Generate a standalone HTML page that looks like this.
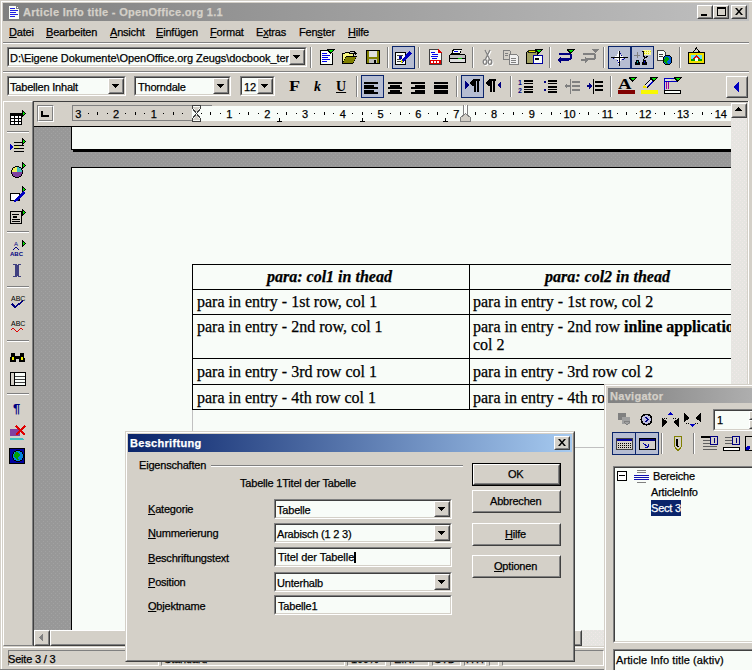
<!DOCTYPE html>
<html><head><meta charset="utf-8">
<style>
*{margin:0;padding:0;box-sizing:border-box}
html,body{width:752px;height:670px;overflow:hidden;background:#D4D0C8;font-family:"Liberation Sans",sans-serif;font-size:11px;color:#000;position:relative}
.a{position:absolute}
.t{position:absolute;white-space:nowrap;line-height:13px;letter-spacing:-0.2px;-webkit-text-stroke:0.25px currentColor}
.b{font-weight:bold;letter-spacing:0.3px}
u{text-decoration:underline;text-underline-offset:1px}
.s{font-family:"Liberation Serif",serif;font-size:16px;line-height:18px;letter-spacing:0}
svg.a{overflow:visible}
</style></head><body>
<div class="a" style="left:0px;top:0px;width:752px;height:1px;background:#D4D0C8"></div>
<div class="a" style="left:1px;top:1px;width:751px;height:1px;background:#FFFFFF"></div>
<div class="a" style="left:1px;top:1px;width:1px;height:669px;background:#FFFFFF"></div>
<div class="a" style="left:3px;top:3px;width:746px;height:18px;background:linear-gradient(90deg,#808080,#C0C0C0)"></div>
<svg class="a" style="left:8px;top:5px" width="12" height="15" viewBox="0 0 12 15" shape-rendering="crispEdges"><rect x="0.5" y="0.5" width="11" height="14" fill="#F8FCF8" stroke="#808080"/><rect x="8" y="1" width="3" height="3" fill="#808080"/><rect x="9" y="2" width="1" height="1" fill="#fff"/><g fill="#2020E0"><rect x="2" y="3" width="5" height="1"/><rect x="2" y="5" width="8" height="1"/><rect x="2" y="7" width="6" height="1"/><rect x="2" y="9" width="8" height="1"/><rect x="2" y="11" width="5" height="1"/></g></svg>
<div class="t b" style="left:23px;top:6px;color:#D4D0C8">Article Info title - OpenOffice.org 1.1</div>
<div class="a" style="left:697px;top:5px;width:16px;height:14px;background:#D4D0C8;border-style:solid;border-width:1px;border-color:#FFFFFF #404040 #404040 #FFFFFF"><div class="a" style="left:0;top:0;right:0;bottom:0;border-style:solid;border-width:1px;border-color:#D4D0C8 #808080 #808080 #D4D0C8"></div></div>
<div class="a" style="left:713px;top:5px;width:16px;height:14px;background:#D4D0C8;border-style:solid;border-width:1px;border-color:#FFFFFF #404040 #404040 #FFFFFF"><div class="a" style="left:0;top:0;right:0;bottom:0;border-style:solid;border-width:1px;border-color:#D4D0C8 #808080 #808080 #D4D0C8"></div></div>
<div class="a" style="left:731px;top:5px;width:16px;height:14px;background:#D4D0C8;border-style:solid;border-width:1px;border-color:#FFFFFF #404040 #404040 #FFFFFF"><div class="a" style="left:0;top:0;right:0;bottom:0;border-style:solid;border-width:1px;border-color:#D4D0C8 #808080 #808080 #D4D0C8"></div></div>
<div class="a" style="left:701px;top:14px;width:6px;height:2px;background:#000"></div>
<div class="a" style="left:717px;top:7px;width:9px;height:9px;border:1px solid #000;border-top-width:2px"></div>
<svg class="a" style="left:735px;top:8px" width="8" height="7" viewBox="0 0 8 7" shape-rendering="crispEdges"><path d="M0 0h2l2 2.5 2-2.5h2l-3 3.5 3 3.5h-2l-2-2.5-2 2.5h-2l3-3.5z" fill="#000" shape-rendering="geometricPrecision"/></svg>
<div class="t " style="left:9px;top:26px;"><u>D</u>atei</div>
<div class="t " style="left:46px;top:26px;"><u>B</u>earbeiten</div>
<div class="t " style="left:110px;top:26px;"><u>A</u>nsicht</div>
<div class="t " style="left:156px;top:26px;"><u>E</u>infügen</div>
<div class="t " style="left:210px;top:26px;"><u>F</u>ormat</div>
<div class="t " style="left:256px;top:26px;">E<u>x</u>tras</div>
<div class="t " style="left:299px;top:26px;">Fen<u>s</u>ter</div>
<div class="t " style="left:348px;top:26px;"><u>H</u>ilfe</div>
<div class="a" style="left:3px;top:42px;width:746px;height:1px;background:#808080"></div>
<div class="a" style="left:3px;top:43px;width:746px;height:1px;background:#FFFFFF"></div>
<div class="a" style="left:7px;top:47px;width:300px;height:20px;background:#F8FCF8;border-style:solid;border-width:1px;border-color:#808080 #FFFFFF #FFFFFF #808080"><div class="a" style="left:0;top:0;right:0;bottom:0;border-style:solid;border-width:1px;border-color:#404040 #D4D0C8 #D4D0C8 #404040"></div></div>
<div class="t " style="left:10px;top:52px;letter-spacing:-0.06px">D:\Eigene Dokumente\OpenOffice.org Zeugs\docbook_ter</div>
<div class="a" style="left:289px;top:49px;width:16px;height:16px;background:#D4D0C8;border-style:solid;border-width:1px;border-color:#FFFFFF #404040 #404040 #FFFFFF"><div class="a" style="left:0;top:0;right:0;bottom:0;border-style:solid;border-width:1px;border-color:#D4D0C8 #808080 #808080 #D4D0C8"></div></div>
<svg class="a" style="left:293px;top:55px" width="7" height="4"><path d="M0 0h7v1h-1v1h-1v1h-1v1h-1v-1h-1v-1h-1v-1h-1z" fill="#000"/></svg>
<div class="a" style="left:310px;top:47px;width:1px;height:21px;background:#808080"></div>
<div class="a" style="left:311px;top:47px;width:1px;height:21px;background:#FFFFFF"></div>
<div class="a" style="left:387px;top:47px;width:1px;height:21px;background:#808080"></div>
<div class="a" style="left:388px;top:47px;width:1px;height:21px;background:#FFFFFF"></div>
<div class="a" style="left:418px;top:47px;width:1px;height:21px;background:#808080"></div>
<div class="a" style="left:419px;top:47px;width:1px;height:21px;background:#FFFFFF"></div>
<div class="a" style="left:472px;top:47px;width:1px;height:21px;background:#808080"></div>
<div class="a" style="left:473px;top:47px;width:1px;height:21px;background:#FFFFFF"></div>
<div class="a" style="left:549px;top:47px;width:1px;height:21px;background:#808080"></div>
<div class="a" style="left:550px;top:47px;width:1px;height:21px;background:#FFFFFF"></div>
<div class="a" style="left:603px;top:47px;width:1px;height:21px;background:#808080"></div>
<div class="a" style="left:604px;top:47px;width:1px;height:21px;background:#FFFFFF"></div>
<div class="a" style="left:679px;top:47px;width:1px;height:21px;background:#808080"></div>
<div class="a" style="left:680px;top:47px;width:1px;height:21px;background:#FFFFFF"></div>
<div class="a" style="left:392px;top:46px;width:23px;height:23px;background:#B6BDD2;border:1px solid #0A246A"></div>
<div class="a" style="left:608px;top:46px;width:23px;height:23px;background:#B6BDD2;border:1px solid #0A246A"></div>
<div class="a" style="left:631px;top:46px;width:23px;height:23px;background:#B6BDD2;border:1px solid #0A246A"></div>
<div class="a" style="left:3px;top:71px;width:746px;height:1px;background:#808080"></div>
<div class="a" style="left:3px;top:72px;width:746px;height:1px;background:#FFFFFF"></div>
<div class="a" style="left:7px;top:76px;width:119px;height:20px;background:#F8FCF8;border-style:solid;border-width:1px;border-color:#808080 #FFFFFF #FFFFFF #808080"><div class="a" style="left:0;top:0;right:0;bottom:0;border-style:solid;border-width:1px;border-color:#404040 #D4D0C8 #D4D0C8 #404040"></div></div>
<div class="t " style="left:10px;top:81px;">Tabellen Inhalt</div>
<div class="a" style="left:108px;top:78px;width:16px;height:16px;background:#D4D0C8;border-style:solid;border-width:1px;border-color:#FFFFFF #404040 #404040 #FFFFFF"><div class="a" style="left:0;top:0;right:0;bottom:0;border-style:solid;border-width:1px;border-color:#D4D0C8 #808080 #808080 #D4D0C8"></div></div>
<svg class="a" style="left:112px;top:84px" width="7" height="4"><path d="M0 0h7v1h-1v1h-1v1h-1v1h-1v-1h-1v-1h-1v-1h-1z" fill="#000"/></svg>
<div class="a" style="left:134px;top:76px;width:97px;height:20px;background:#F8FCF8;border-style:solid;border-width:1px;border-color:#808080 #FFFFFF #FFFFFF #808080"><div class="a" style="left:0;top:0;right:0;bottom:0;border-style:solid;border-width:1px;border-color:#404040 #D4D0C8 #D4D0C8 #404040"></div></div>
<div class="t " style="left:138px;top:81px;">Thorndale</div>
<div class="a" style="left:213px;top:78px;width:16px;height:16px;background:#D4D0C8;border-style:solid;border-width:1px;border-color:#FFFFFF #404040 #404040 #FFFFFF"><div class="a" style="left:0;top:0;right:0;bottom:0;border-style:solid;border-width:1px;border-color:#D4D0C8 #808080 #808080 #D4D0C8"></div></div>
<svg class="a" style="left:217px;top:84px" width="7" height="4"><path d="M0 0h7v1h-1v1h-1v1h-1v1h-1v-1h-1v-1h-1v-1h-1z" fill="#000"/></svg>
<div class="a" style="left:240px;top:76px;width:35px;height:20px;background:#F8FCF8;border-style:solid;border-width:1px;border-color:#808080 #FFFFFF #FFFFFF #808080"><div class="a" style="left:0;top:0;right:0;bottom:0;border-style:solid;border-width:1px;border-color:#404040 #D4D0C8 #D4D0C8 #404040"></div></div>
<div class="t " style="left:244px;top:81px;">12</div>
<div class="a" style="left:257px;top:78px;width:16px;height:16px;background:#D4D0C8;border-style:solid;border-width:1px;border-color:#FFFFFF #404040 #404040 #FFFFFF"><div class="a" style="left:0;top:0;right:0;bottom:0;border-style:solid;border-width:1px;border-color:#D4D0C8 #808080 #808080 #D4D0C8"></div></div>
<svg class="a" style="left:261px;top:84px" width="7" height="4"><path d="M0 0h7v1h-1v1h-1v1h-1v1h-1v-1h-1v-1h-1v-1h-1z" fill="#000"/></svg>
<div class="a" style="left:356px;top:76px;width:1px;height:21px;background:#808080"></div>
<div class="a" style="left:357px;top:76px;width:1px;height:21px;background:#FFFFFF"></div>
<div class="a" style="left:456px;top:76px;width:1px;height:21px;background:#808080"></div>
<div class="a" style="left:457px;top:76px;width:1px;height:21px;background:#FFFFFF"></div>
<div class="a" style="left:510px;top:76px;width:1px;height:21px;background:#808080"></div>
<div class="a" style="left:511px;top:76px;width:1px;height:21px;background:#FFFFFF"></div>
<div class="a" style="left:610px;top:76px;width:1px;height:21px;background:#808080"></div>
<div class="a" style="left:611px;top:76px;width:1px;height:21px;background:#FFFFFF"></div>
<div class="a" style="left:361px;top:75px;width:23px;height:23px;background:#B6BDD2;border:1px solid #0A246A"></div>
<div class="a" style="left:461px;top:75px;width:23px;height:23px;background:#B6BDD2;border:1px solid #0A246A"></div>
<div class="a" style="left:726px;top:76px;width:22px;height:22px;background:#D4D0C8;border-style:solid;border-width:1px;border-color:#FFFFFF #404040 #404040 #FFFFFF"><div class="a" style="left:0;top:0;right:0;bottom:0;border-style:solid;border-width:1px;border-color:#D4D0C8 #808080 #808080 #D4D0C8"></div></div>
<svg class="a" style="left:733px;top:81px" width="7" height="12" viewBox="0 0 7 12" shape-rendering="crispEdges"><path d="M6 0v12L0 6z" fill="#0000C0"/></svg>
<div class="a" style="left:3px;top:101px;width:30px;height:545px;border-style:solid;border-width:1px;border-color:#FFFFFF #808080 #808080 #FFFFFF"></div>
<div class="a" style="left:7px;top:131px;width:22px;height:1px;background:#808080"></div>
<div class="a" style="left:7px;top:132px;width:22px;height:1px;background:#FFFFFF"></div>
<div class="a" style="left:7px;top:231px;width:22px;height:1px;background:#808080"></div>
<div class="a" style="left:7px;top:232px;width:22px;height:1px;background:#FFFFFF"></div>
<div class="a" style="left:7px;top:286px;width:22px;height:1px;background:#808080"></div>
<div class="a" style="left:7px;top:287px;width:22px;height:1px;background:#FFFFFF"></div>
<div class="a" style="left:7px;top:340px;width:22px;height:1px;background:#808080"></div>
<div class="a" style="left:7px;top:341px;width:22px;height:1px;background:#FFFFFF"></div>
<div class="a" style="left:7px;top:393px;width:22px;height:1px;background:#808080"></div>
<div class="a" style="left:7px;top:394px;width:22px;height:1px;background:#FFFFFF"></div>
<div class="a" style="left:33px;top:101px;width:715px;height:1px;background:#404040"></div>
<div class="a" style="left:33px;top:101px;width:1px;height:545px;background:#404040"></div>
<div class="a" style="left:34px;top:102px;width:714px;height:1px;background:#D4D0C8"></div>
<div class="a" style="left:37px;top:105px;width:17px;height:17px;border-style:solid;border-width:1px;border-color:#808080 #FFFFFF #FFFFFF #808080"><div class="a" style="left:0;top:0;right:0;bottom:0;border-style:solid;border-width:1px;border-color:#FFFFFF #808080 #808080 #FFFFFF"></div></div>
<svg class="a" style="left:41px;top:111px" width="8" height="6" viewBox="0 0 8 6" shape-rendering="crispEdges"><path d="M0 0h2v4h6v2h-8z" fill="#000"/></svg>
<div class="a" style="left:72px;top:105px;width:140px;height:16px;background:#D4D0C8;border:1px solid #808080;border-right:none"></div>
<div class="a" style="left:192px;top:106px;width:539px;height:15px;background:#F8FCF8"></div>
<div class="a" style="left:34px;top:126px;width:697px;height:1px;background:#000"></div>
<div class="a" style="left:34px;top:127px;width:697px;height:503px;overflow:hidden;background:conic-gradient(from 270deg at 1px 1px,#A2A2A2 25%,transparent 0) 1px 2px/4px 4px,conic-gradient(from 270deg at 1px 1px,#A2A2A2 25%,transparent 0) 3px 0px/4px 4px,#989898">
<div class="a" style="left:37px;top:-7px;width:700px;height:30px;background:#F8FCF8;border-left:1px solid #000;border-bottom:1px solid #000"></div>
<div class="a" style="left:39px;top:23px;width:700px;height:2px;background:#000"></div>
<div class="a" style="left:37px;top:40px;width:700px;height:470px;background:#F8FCF8;border-left:1px solid #000;border-top:1px solid #000"></div>
<div class="a" style="left:158px;top:283px;width:1px;height:220px;background:#C0C0C0"></div>
<div class="a" style="left:541px;top:320px;width:30px;height:1px;background:#C0C0C0"></div>
<div class="a" style="left:158px;top:137px;width:560px;height:1px;background:#000"></div>
<div class="a" style="left:158px;top:162px;width:560px;height:1px;background:#000"></div>
<div class="a" style="left:158px;top:187px;width:560px;height:1px;background:#000"></div>
<div class="a" style="left:158px;top:231px;width:560px;height:1px;background:#000"></div>
<div class="a" style="left:158px;top:257px;width:560px;height:1px;background:#000"></div>
<div class="a" style="left:158px;top:282px;width:560px;height:1px;background:#000"></div>
<div class="a" style="left:158px;top:137px;width:1px;height:146px;background:#000"></div>
<div class="a" style="left:435px;top:137px;width:1px;height:146px;background:#000"></div>
<div class="a" style="left:711px;top:137px;width:1px;height:146px;background:#000"></div>
<div class="t s" style="left:233px;top:141px;"><b><i>para: col1 in thead</i></b></div>
<div class="t s" style="left:511px;top:141px;"><b><i>para: col2 in thead</i></b></div>
<div class="t s" style="left:163px;top:166px;">para in entry - 1st row, col 1</div>
<div class="t s" style="left:439px;top:166px;">para in entry - 1st row, col 2</div>
<div class="t s" style="left:163px;top:191px;">para in entry - 2nd row, col 1</div>
<div class="t s" style="left:439px;top:191px;">para in entry - 2nd row <b>inline application</b></div>
<div class="t s" style="left:439px;top:209px;">col 2</div>
<div class="t s" style="left:163px;top:236px;">para in entry - 3rd row col 1</div>
<div class="t s" style="left:439px;top:236px;">para in entry - 3rd row col 2</div>
<div class="t s" style="left:163px;top:262px;">para in entry - 4th row col 1</div>
<div class="t s" style="left:439px;top:262px;">para in entry - 4th row col 2</div>
</div>
<div class="a" style="left:731px;top:118px;width:16px;height:528px;background:conic-gradient(from 270deg at 1px 1px,#F0E8E8 25%,transparent 0) 1px 2px/4px 4px,conic-gradient(from 270deg at 1px 1px,#F0E8E8 25%,transparent 0) 3px 0px/4px 4px,#E6E5E1"></div>
<div class="a" style="left:731px;top:103px;width:16px;height:15px;background:#D4D0C8;border-style:solid;border-width:1px;border-color:#FFFFFF #404040 #404040 #FFFFFF"><div class="a" style="left:0;top:0;right:0;bottom:0;border-style:solid;border-width:1px;border-color:#D4D0C8 #808080 #808080 #D4D0C8"></div></div>
<svg class="a" style="left:735px;top:107px" width="7" height="4" viewBox="0 0 7 4" shape-rendering="crispEdges"><path d="M3 0h1v1h1v1h1v1h1v1h-7v-1h1v-1h1v-1h1z" fill="#000"/></svg>
<div class="a" style="left:748px;top:101px;width:1px;height:546px;background:#FFFFFF"></div>
<div class="a" style="left:749px;top:101px;width:3px;height:569px;background:#D4D0C8"></div>
<div class="a" style="left:34px;top:630px;width:697px;height:16px;background:conic-gradient(from 270deg at 1px 1px,#F0E8E8 25%,transparent 0) 1px 2px/4px 4px,conic-gradient(from 270deg at 1px 1px,#F0E8E8 25%,transparent 0) 3px 0px/4px 4px,#E6E5E1"></div>
<div class="a" style="left:34px;top:630px;width:16px;height:16px;background:#D4D0C8;border-style:solid;border-width:1px;border-color:#FFFFFF #404040 #404040 #FFFFFF"><div class="a" style="left:0;top:0;right:0;bottom:0;border-style:solid;border-width:1px;border-color:#D4D0C8 #808080 #808080 #D4D0C8"></div></div>
<svg class="a" style="left:39px;top:634px" width="4" height="7" viewBox="0 0 4 7" shape-rendering="crispEdges"><path d="M3 0h1v7h-1v-1h-1v-1h-1v-1h-1v-1h1v-1h1v-1h1z" fill="#808080"/></svg>
<div class="a" style="left:50px;top:630px;width:532px;height:16px;background:#D4D0C8;border-style:solid;border-width:1px;border-color:#FFFFFF #404040 #404040 #FFFFFF"><div class="a" style="left:0;top:0;right:0;bottom:0;border-style:solid;border-width:1px;border-color:#D4D0C8 #808080 #808080 #D4D0C8"></div></div>
<div class="a" style="left:33px;top:646px;width:719px;height:1px;background:#D4D0C8"></div>
<div class="a" style="left:3px;top:647px;width:749px;height:1px;background:#FFFFFF"></div>
<div class="a" style="left:8px;top:650px;width:151px;height:16px;background:#D4D0C8;border-style:solid;border-width:1px;border-color:#808080 #FFFFFF #FFFFFF #808080"></div>
<div class="t " style="left:8px;top:653px;">Seite 3 / 3</div>
<div class="a" style="left:161px;top:650px;width:184px;height:16px;background:#D4D0C8;border-style:solid;border-width:1px;border-color:#808080 #FFFFFF #FFFFFF #808080"></div>
<div class="t " style="left:164px;top:653px;">Standard</div>
<div class="a" style="left:347px;top:650px;width:39px;height:16px;background:#D4D0C8;border-style:solid;border-width:1px;border-color:#808080 #FFFFFF #FFFFFF #808080"></div>
<div class="t " style="left:351px;top:653px;">100%</div>
<div class="a" style="left:390px;top:650px;width:39px;height:16px;background:#D4D0C8;border-style:solid;border-width:1px;border-color:#808080 #FFFFFF #FFFFFF #808080"></div>
<div class="t " style="left:394px;top:653px;">EINF</div>
<div class="a" style="left:432px;top:650px;width:29px;height:16px;background:#D4D0C8;border-style:solid;border-width:1px;border-color:#808080 #FFFFFF #FFFFFF #808080"></div>
<div class="t " style="left:434px;top:653px;">STD</div>
<div class="a" style="left:464px;top:650px;width:22px;height:16px;background:#D4D0C8;border-style:solid;border-width:1px;border-color:#808080 #FFFFFF #FFFFFF #808080"></div>
<div class="t " style="left:466px;top:653px;">HYP</div>
<div class="a" style="left:489px;top:650px;width:10px;height:16px;background:#D4D0C8;border-style:solid;border-width:1px;border-color:#808080 #FFFFFF #FFFFFF #808080"></div>
<div class="a" style="left:502px;top:650px;width:102px;height:16px;background:#D4D0C8;border-style:solid;border-width:1px;border-color:#808080 #FFFFFF #FFFFFF #808080"></div>
<div class="a" style="left:0px;top:669px;width:752px;height:1px;background:#808080"></div>
<div class="a" style="left:125px;top:431px;width:450px;height:231px;background:#D4D0C8;border-style:solid;border-width:1px;border-color:#D4D0C8 #404040 #404040 #D4D0C8"><div class="a" style="left:0;top:0;right:0;bottom:0;border-style:solid;border-width:1px;border-color:#FFFFFF #808080 #808080 #FFFFFF"></div></div>
<div class="a" style="left:128px;top:434px;width:444px;height:18px;background:linear-gradient(90deg,#0A246A,#A6CAF0)"></div>
<div class="t b" style="left:130px;top:437px;color:#fff">Beschriftung</div>
<div class="a" style="left:554px;top:436px;width:16px;height:14px;background:#D4D0C8;border-style:solid;border-width:1px;border-color:#FFFFFF #404040 #404040 #FFFFFF"><div class="a" style="left:0;top:0;right:0;bottom:0;border-style:solid;border-width:1px;border-color:#D4D0C8 #808080 #808080 #D4D0C8"></div></div>
<svg class="a" style="left:558px;top:439px" width="8" height="7" viewBox="0 0 8 7" shape-rendering="crispEdges"><path d="M0 0h2l2 2.5 2-2.5h2l-3 3.5 3 3.5h-2l-2-2.5-2 2.5h-2l3-3.5z" fill="#000" shape-rendering="geometricPrecision"/></svg>
<div class="t " style="left:139px;top:459px;">Eigenschaften</div>
<div class="a" style="left:211px;top:465px;width:252px;height:1px;background:#808080"></div>
<div class="a" style="left:211px;top:466px;width:252px;height:1px;background:#FFFFFF"></div>
<div class="t " style="left:240px;top:477px;">Tabelle 1Titel der Tabelle</div>
<div class="t " style="left:148px;top:503px;"><u>K</u>ategorie</div>
<div class="t " style="left:148px;top:527px;"><u>N</u>ummerierung</div>
<div class="t " style="left:148px;top:552px;"><u>B</u>eschriftungstext</div>
<div class="t " style="left:148px;top:576px;"><u>P</u>osition</div>
<div class="t " style="left:148px;top:600px;"><u>O</u>bjektname</div>
<div class="a" style="left:274px;top:499px;width:178px;height:20px;background:#F8FCF8;border-style:solid;border-width:1px;border-color:#808080 #FFFFFF #FFFFFF #808080"><div class="a" style="left:0;top:0;right:0;bottom:0;border-style:solid;border-width:1px;border-color:#404040 #D4D0C8 #D4D0C8 #404040"></div></div>
<div class="t " style="left:277px;top:504px;">Tabelle</div>
<div class="a" style="left:434px;top:501px;width:16px;height:16px;background:#D4D0C8;border-style:solid;border-width:1px;border-color:#FFFFFF #404040 #404040 #FFFFFF"><div class="a" style="left:0;top:0;right:0;bottom:0;border-style:solid;border-width:1px;border-color:#D4D0C8 #808080 #808080 #D4D0C8"></div></div>
<svg class="a" style="left:438px;top:507px" width="7" height="4"><path d="M0 0h7v1h-1v1h-1v1h-1v1h-1v-1h-1v-1h-1v-1h-1z" fill="#000"/></svg>
<div class="a" style="left:274px;top:523px;width:178px;height:20px;background:#F8FCF8;border-style:solid;border-width:1px;border-color:#808080 #FFFFFF #FFFFFF #808080"><div class="a" style="left:0;top:0;right:0;bottom:0;border-style:solid;border-width:1px;border-color:#404040 #D4D0C8 #D4D0C8 #404040"></div></div>
<div class="t " style="left:277px;top:528px;">Arabisch (1 2 3)</div>
<div class="a" style="left:434px;top:525px;width:16px;height:16px;background:#D4D0C8;border-style:solid;border-width:1px;border-color:#FFFFFF #404040 #404040 #FFFFFF"><div class="a" style="left:0;top:0;right:0;bottom:0;border-style:solid;border-width:1px;border-color:#D4D0C8 #808080 #808080 #D4D0C8"></div></div>
<svg class="a" style="left:438px;top:531px" width="7" height="4"><path d="M0 0h7v1h-1v1h-1v1h-1v1h-1v-1h-1v-1h-1v-1h-1z" fill="#000"/></svg>
<div class="a" style="left:274px;top:547px;width:178px;height:20px;background:#F8FCF8;border-style:solid;border-width:1px;border-color:#808080 #FFFFFF #FFFFFF #808080"><div class="a" style="left:0;top:0;right:0;bottom:0;border-style:solid;border-width:1px;border-color:#404040 #D4D0C8 #D4D0C8 #404040"></div></div>
<div class="t " style="left:278px;top:551px;letter-spacing:-0.05px">Titel der Tabelle</div>
<div class="a" style="left:354px;top:552px;width:2px;height:11px;background:#000"></div>
<div class="a" style="left:274px;top:572px;width:178px;height:20px;background:#F8FCF8;border-style:solid;border-width:1px;border-color:#808080 #FFFFFF #FFFFFF #808080"><div class="a" style="left:0;top:0;right:0;bottom:0;border-style:solid;border-width:1px;border-color:#404040 #D4D0C8 #D4D0C8 #404040"></div></div>
<div class="t " style="left:277px;top:577px;">Unterhalb</div>
<div class="a" style="left:434px;top:574px;width:16px;height:16px;background:#D4D0C8;border-style:solid;border-width:1px;border-color:#FFFFFF #404040 #404040 #FFFFFF"><div class="a" style="left:0;top:0;right:0;bottom:0;border-style:solid;border-width:1px;border-color:#D4D0C8 #808080 #808080 #D4D0C8"></div></div>
<svg class="a" style="left:438px;top:580px" width="7" height="4"><path d="M0 0h7v1h-1v1h-1v1h-1v1h-1v-1h-1v-1h-1v-1h-1z" fill="#000"/></svg>
<div class="a" style="left:274px;top:595px;width:178px;height:20px;background:#F8FCF8;border-style:solid;border-width:1px;border-color:#808080 #FFFFFF #FFFFFF #808080"><div class="a" style="left:0;top:0;right:0;bottom:0;border-style:solid;border-width:1px;border-color:#404040 #D4D0C8 #D4D0C8 #404040"></div></div>
<div class="t " style="left:278px;top:600px;">Tabelle1</div>
<div class="a" style="left:472px;top:463px;width:89px;height:23px;border:1px solid #000"></div>
<div class="a" style="left:473px;top:464px;width:87px;height:21px;background:#D4D0C8;border-style:solid;border-width:1px;border-color:#FFFFFF #404040 #404040 #FFFFFF"><div class="a" style="left:0;top:0;right:0;bottom:0;border-style:solid;border-width:1px;border-color:#D4D0C8 #808080 #808080 #D4D0C8"></div></div>
<div class="t " style="left:508px;top:468px;">OK</div>
<div class="a" style="left:472px;top:490px;width:89px;height:23px;background:#D4D0C8;border-style:solid;border-width:1px;border-color:#FFFFFF #404040 #404040 #FFFFFF"><div class="a" style="left:0;top:0;right:0;bottom:0;border-style:solid;border-width:1px;border-color:#D4D0C8 #808080 #808080 #D4D0C8"></div></div>
<div class="t " style="left:490px;top:495px;">Abbrechen</div>
<div class="a" style="left:472px;top:523px;width:89px;height:23px;background:#D4D0C8;border-style:solid;border-width:1px;border-color:#FFFFFF #404040 #404040 #FFFFFF"><div class="a" style="left:0;top:0;right:0;bottom:0;border-style:solid;border-width:1px;border-color:#D4D0C8 #808080 #808080 #D4D0C8"></div></div>
<div class="t " style="left:505px;top:528px;"><u>H</u>ilfe</div>
<div class="a" style="left:472px;top:555px;width:89px;height:23px;background:#D4D0C8;border-style:solid;border-width:1px;border-color:#FFFFFF #404040 #404040 #FFFFFF"><div class="a" style="left:0;top:0;right:0;bottom:0;border-style:solid;border-width:1px;border-color:#D4D0C8 #808080 #808080 #D4D0C8"></div></div>
<div class="t " style="left:494px;top:560px;"><u>O</u>ptionen</div>
<div class="a" style="left:604px;top:384px;width:160px;height:300px;background:#D4D0C8;border-style:solid;border-width:1px;border-color:#D4D0C8 #404040 #404040 #D4D0C8"><div class="a" style="left:0;top:0;right:0;bottom:0;border-style:solid;border-width:1px;border-color:#FFFFFF #808080 #808080 #FFFFFF"></div></div>
<div class="a" style="left:608px;top:388px;width:150px;height:15px;background:linear-gradient(90deg,#808080,#B0B0B0)"></div>
<div class="t b" style="left:610px;top:390px;color:#D4D0C8">Navigator</div>
<div class="a" style="left:713px;top:409px;width:50px;height:22px;background:#F8FCF8;border-style:solid;border-width:1px;border-color:#808080 #FFFFFF #FFFFFF #808080"><div class="a" style="left:0;top:0;right:0;bottom:0;border-style:solid;border-width:1px;border-color:#404040 #D4D0C8 #D4D0C8 #404040"></div></div>
<div class="t " style="left:717px;top:414px;">1</div>
<div class="a" style="left:749px;top:411px;width:12px;height:9px;background:#D4D0C8;border-style:solid;border-width:1px;border-color:#FFFFFF #404040 #404040 #FFFFFF"><div class="a" style="left:0;top:0;right:0;bottom:0;border-style:solid;border-width:1px;border-color:#D4D0C8 #808080 #808080 #D4D0C8"></div></div>
<div class="a" style="left:749px;top:420px;width:12px;height:9px;background:#D4D0C8;border-style:solid;border-width:1px;border-color:#FFFFFF #404040 #404040 #FFFFFF"><div class="a" style="left:0;top:0;right:0;bottom:0;border-style:solid;border-width:1px;border-color:#D4D0C8 #808080 #808080 #D4D0C8"></div></div>
<div class="a" style="left:612px;top:432px;width:24px;height:23px;background:#B6BDD2;border:1px solid #0A246A"></div>
<div class="a" style="left:635px;top:432px;width:24px;height:23px;background:#B6BDD2;border:1px solid #0A246A"></div>
<div class="a" style="left:661px;top:433px;width:1px;height:21px;background:#808080"></div>
<div class="a" style="left:662px;top:433px;width:1px;height:21px;background:#FFFFFF"></div>
<div class="a" style="left:693px;top:433px;width:1px;height:21px;background:#808080"></div>
<div class="a" style="left:694px;top:433px;width:1px;height:21px;background:#FFFFFF"></div>
<div class="a" style="left:613px;top:466px;width:150px;height:177px;background:#F8FCF8;border-style:solid;border-width:1px;border-color:#808080 #FFFFFF #FFFFFF #808080"><div class="a" style="left:0;top:0;right:0;bottom:0;border-style:solid;border-width:1px;border-color:#404040 #D4D0C8 #D4D0C8 #404040"></div></div>
<div class="a" style="left:651px;top:500px;width:30px;height:16px;background:#0A246A"></div>
<div class="t " style="left:653px;top:470px;">Bereiche</div>
<div class="t " style="left:651px;top:486px;">ArticleInfo</div>
<div class="t " style="left:651px;top:502px;color:#fff">Sect 3</div>
<svg class="a" style="left:617px;top:471px" width="10" height="10" viewBox="0 0 10 10" shape-rendering="crispEdges"><rect x="0.5" y="0.5" width="9" height="9" fill="#fff" stroke="#000"/><rect x="2" y="4" width="6" height="1" fill="#000"/></svg>
<svg class="a" style="left:634px;top:470px" width="15" height="13" viewBox="0 0 15 13" shape-rendering="crispEdges"><g fill="#808080"><rect x="3" y="0" width="9" height="1"/><rect x="3" y="2" width="9" height="1"/><rect x="3" y="12" width="9" height="1"/></g><g fill="#1010B0"><rect x="0" y="5" width="15" height="1"/><rect x="0" y="7" width="15" height="1"/><rect x="0" y="9" width="15" height="1"/></g></svg>
<div class="a" style="left:613px;top:649px;width:150px;height:24px;background:#F8FCF8;border-style:solid;border-width:1px;border-color:#808080 #FFFFFF #FFFFFF #808080"><div class="a" style="left:0;top:0;right:0;bottom:0;border-style:solid;border-width:1px;border-color:#404040 #D4D0C8 #D4D0C8 #404040"></div></div>
<div class="t " style="left:616px;top:654px;letter-spacing:0.1px">Article Info title (aktiv)</div>
<div class="t" style="left:63.2px;top:108px;width:30px;text-align:center;letter-spacing:0">3</div>
<div class="a" style="left:88px;top:113px;width:1px;height:1px;background:#000"></div>
<div class="a" style="left:97px;top:112px;width:1px;height:3px;background:#000"></div>
<div class="a" style="left:107px;top:113px;width:1px;height:1px;background:#000"></div>
<div class="t" style="left:101.0px;top:108px;width:30px;text-align:center;letter-spacing:0">2</div>
<div class="a" style="left:125px;top:113px;width:1px;height:1px;background:#000"></div>
<div class="a" style="left:135px;top:112px;width:1px;height:3px;background:#000"></div>
<div class="a" style="left:144px;top:113px;width:1px;height:1px;background:#000"></div>
<div class="t" style="left:138.8px;top:108px;width:30px;text-align:center;letter-spacing:0">1</div>
<div class="a" style="left:163px;top:113px;width:1px;height:1px;background:#000"></div>
<div class="a" style="left:173px;top:112px;width:1px;height:3px;background:#000"></div>
<div class="a" style="left:182px;top:113px;width:1px;height:1px;background:#000"></div>
<div class="a" style="left:201px;top:113px;width:1px;height:1px;background:#000"></div>
<div class="a" style="left:210px;top:112px;width:1px;height:3px;background:#000"></div>
<div class="a" style="left:220px;top:113px;width:1px;height:1px;background:#000"></div>
<div class="t" style="left:214.4px;top:108px;width:30px;text-align:center;letter-spacing:0">1</div>
<div class="a" style="left:239px;top:113px;width:1px;height:1px;background:#000"></div>
<div class="a" style="left:248px;top:112px;width:1px;height:3px;background:#000"></div>
<div class="a" style="left:258px;top:113px;width:1px;height:1px;background:#000"></div>
<div class="t" style="left:252.2px;top:108px;width:30px;text-align:center;letter-spacing:0">2</div>
<div class="a" style="left:277px;top:113px;width:1px;height:1px;background:#000"></div>
<div class="a" style="left:286px;top:112px;width:1px;height:3px;background:#000"></div>
<div class="a" style="left:296px;top:113px;width:1px;height:1px;background:#000"></div>
<div class="t" style="left:290.0px;top:108px;width:30px;text-align:center;letter-spacing:0">3</div>
<div class="a" style="left:314px;top:113px;width:1px;height:1px;background:#000"></div>
<div class="a" style="left:324px;top:112px;width:1px;height:3px;background:#000"></div>
<div class="a" style="left:333px;top:113px;width:1px;height:1px;background:#000"></div>
<div class="t" style="left:327.8px;top:108px;width:30px;text-align:center;letter-spacing:0">4</div>
<div class="a" style="left:352px;top:113px;width:1px;height:1px;background:#000"></div>
<div class="a" style="left:362px;top:112px;width:1px;height:3px;background:#000"></div>
<div class="a" style="left:371px;top:113px;width:1px;height:1px;background:#000"></div>
<div class="t" style="left:365.6px;top:108px;width:30px;text-align:center;letter-spacing:0">5</div>
<div class="a" style="left:390px;top:113px;width:1px;height:1px;background:#000"></div>
<div class="a" style="left:400px;top:112px;width:1px;height:3px;background:#000"></div>
<div class="a" style="left:409px;top:113px;width:1px;height:1px;background:#000"></div>
<div class="t" style="left:403.4px;top:108px;width:30px;text-align:center;letter-spacing:0">6</div>
<div class="a" style="left:428px;top:113px;width:1px;height:1px;background:#000"></div>
<div class="a" style="left:437px;top:112px;width:1px;height:3px;background:#000"></div>
<div class="a" style="left:447px;top:113px;width:1px;height:1px;background:#000"></div>
<div class="t" style="left:441.2px;top:108px;width:30px;text-align:center;letter-spacing:0">7</div>
<div class="a" style="left:466px;top:113px;width:1px;height:1px;background:#000"></div>
<div class="a" style="left:475px;top:112px;width:1px;height:3px;background:#000"></div>
<div class="a" style="left:485px;top:113px;width:1px;height:1px;background:#000"></div>
<div class="t" style="left:479.0px;top:108px;width:30px;text-align:center;letter-spacing:0">8</div>
<div class="a" style="left:503px;top:113px;width:1px;height:1px;background:#000"></div>
<div class="a" style="left:513px;top:112px;width:1px;height:3px;background:#000"></div>
<div class="a" style="left:522px;top:113px;width:1px;height:1px;background:#000"></div>
<div class="t" style="left:516.8px;top:108px;width:30px;text-align:center;letter-spacing:0">9</div>
<div class="a" style="left:541px;top:113px;width:1px;height:1px;background:#000"></div>
<div class="a" style="left:551px;top:112px;width:1px;height:3px;background:#000"></div>
<div class="a" style="left:560px;top:113px;width:1px;height:1px;background:#000"></div>
<div class="t" style="left:554.6px;top:108px;width:30px;text-align:center;letter-spacing:0">10</div>
<div class="a" style="left:579px;top:113px;width:1px;height:1px;background:#000"></div>
<div class="a" style="left:588px;top:112px;width:1px;height:3px;background:#000"></div>
<div class="a" style="left:598px;top:113px;width:1px;height:1px;background:#000"></div>
<div class="t" style="left:592.4px;top:108px;width:30px;text-align:center;letter-spacing:0">11</div>
<div class="a" style="left:617px;top:113px;width:1px;height:1px;background:#000"></div>
<div class="a" style="left:626px;top:112px;width:1px;height:3px;background:#000"></div>
<div class="a" style="left:636px;top:113px;width:1px;height:1px;background:#000"></div>
<div class="t" style="left:630.2px;top:108px;width:30px;text-align:center;letter-spacing:0">12</div>
<div class="a" style="left:655px;top:113px;width:1px;height:1px;background:#000"></div>
<div class="a" style="left:664px;top:112px;width:1px;height:3px;background:#000"></div>
<div class="a" style="left:674px;top:113px;width:1px;height:1px;background:#000"></div>
<div class="t" style="left:668.0px;top:108px;width:30px;text-align:center;letter-spacing:0">13</div>
<div class="a" style="left:692px;top:113px;width:1px;height:1px;background:#000"></div>
<div class="a" style="left:702px;top:112px;width:1px;height:3px;background:#000"></div>
<div class="a" style="left:711px;top:113px;width:1px;height:1px;background:#000"></div>
<div class="t" style="left:705.8px;top:108px;width:30px;text-align:center;letter-spacing:0">14</div>
<svg class="a" style="left:192px;top:105px" width="9" height="17" viewBox="0 0 9 17" shape-rendering="crispEdges"><path d="M0.5 0.5h8v3l-4 5 4 5v3h-8v-3l4-5-4-5z" fill="#F8FCF8" stroke="#404040"/><path d="M1 2h7l-3.5 5z M1 15h7l-3.5-5z" fill="#D4D0C8"/><path d="M0 0.5h9M0 16.5h9" stroke="#404040"/></svg>
<svg class="a" style="left:460px;top:105px" width="11" height="17" viewBox="0 0 11 17" shape-rendering="crispEdges"><path d="M3.5 0v9M7.5 0v9" stroke="#808080"/><path d="M4.5 0v9M6.5 0v9" stroke="#fff"/><path d="M0.5 16.5v-4l5-4 5 4v4z" fill="#D4D0C8" stroke="#808080"/></svg>
<div class="a" style="left:279px;top:118px;width:1px;height:3px;background:#000"></div>
<div class="a" style="left:277px;top:121px;width:5px;height:1px;background:#000"></div>
<div class="a" style="left:362px;top:118px;width:1px;height:3px;background:#000"></div>
<div class="a" style="left:360px;top:121px;width:5px;height:1px;background:#000"></div>
<div class="a" style="left:445px;top:118px;width:1px;height:3px;background:#000"></div>
<div class="a" style="left:443px;top:121px;width:5px;height:1px;background:#000"></div>
<svg class="a" style="left:320px;top:49px" width="14" height="16" viewBox="0 0 14 16" shape-rendering="crispEdges"><path d="M0 1h9l4 4v11h-13z" fill="#000"/><path d="M1 2h8l3 3v10h-11z" fill="#F8FCF8"/><g fill="#0000F0"><rect x="2" y="4" width="5" height="1"/><rect x="2" y="6" width="8" height="1"/><rect x="2" y="8" width="6" height="1"/><rect x="2" y="10" width="8" height="1"/><rect x="2" y="12" width="5" height="1"/></g></svg>
<svg class="a" style="left:327px;top:49px" width="8" height="5" viewBox="0 0 8 5" shape-rendering="crispEdges"><path d="M0 0h8v1h-1v1h-1v1h-1v1h-1v1h-1v-1h-1v-1h-1v-1h-1v-1h-1z" fill="#000"/><path d="M2 1h4v1h-1v1h-2v-1h-1z" fill="#00E000"/></svg>
<svg class="a" style="left:342px;top:50px" width="16" height="14" viewBox="0 0 16 14" shape-rendering="crispEdges"><path d="M0 3h2l1-1h4l1 1h4v3h3l-4 8h-11z" fill="#000"/><path d="M1 4h1l1-1h3l1 1h4v2h-7l-3 6z" fill="#F8F880"/><path d="M4 7h10l-3 6h-10z" fill="#808000"/><path d="M8 1h4l2 2h1l-2 2-2-2h1l-1-1h-3z" fill="#000"/></svg>
<svg class="a" style="left:366px;top:50px" width="14" height="14" viewBox="0 0 14 14" shape-rendering="crispEdges"><rect x="0" y="0" width="14" height="14" fill="#000"/><rect x="1" y="1" width="12" height="12" fill="#808000"/><rect x="3" y="1" width="8" height="6" fill="#E0E0E0"/><rect x="3" y="9" width="8" height="4" fill="#C0C0C0"/><rect x="8" y="10" width="2" height="3" fill="#000"/></svg>
<svg class="a" style="left:395px;top:51px" width="17" height="14" viewBox="0 0 17 14" shape-rendering="crispEdges"><rect x="0" y="1" width="11" height="13" fill="#000"/><rect x="1" y="2" width="9" height="11" fill="#F8FCF8"/><g fill="#404040"><rect x="2" y="4" width="6" height="1"/><rect x="2" y="8" width="4" height="1"/><rect x="2" y="10" width="6" height="1"/></g><rect x="4" y="5" width="3" height="3" fill="#0000A0"/><path d="M14 0l3 2-8 9-3 1 1-3z" fill="#0000C0"/><path d="M6 9l2 2-2 1z" fill="#E0E000"/></svg>
<svg class="a" style="left:429px;top:49px" width="13" height="16" viewBox="0 0 13 16" shape-rendering="crispEdges"><path d="M0 0h9l4 4v12h-13z" fill="#404040"/><path d="M1 1h8l3 3v7h-11z" fill="#F8FCF8"/><path d="M9 0l4 4h-4z" fill="#E00000"/><g fill="#0000F0"><rect x="2" y="3" width="4" height="1"/><rect x="3" y="5" width="6" height="1"/><rect x="2" y="7" width="7" height="1"/><rect x="3" y="9" width="5" height="1"/></g><rect x="1" y="11" width="11" height="4" fill="#E00000"/><g fill="#fff"><rect x="2" y="12" width="2" height="2"/><rect x="5" y="12" width="2" height="2"/><rect x="8" y="12" width="2" height="2"/></g></svg>
<svg class="a" style="left:449px;top:49px" width="17" height="15" viewBox="0 0 17 15" shape-rendering="crispEdges"><path d="M4 0h9l-2 5h-9z" fill="#000"/><path d="M5 1h7l-1 3h-7z" fill="#F8FCF8"/><rect x="5" y="2" width="4" height="1" fill="#0000F0"/><path d="M1 5h15l1 2v6l-1 1h-15l-1-1v-6z" fill="#000"/><rect x="1" y="6" width="15" height="3" fill="#C0C0C0"/><rect x="1" y="10" width="15" height="3" fill="#E0E0E0"/><rect x="9" y="9" width="4" height="1" fill="#00C000"/></svg>
<svg class="a" style="left:482px;top:50px" width="13" height="16" viewBox="0 0 13 16"><g transform="translate(1,1)" stroke="#fff" fill="none" stroke-width="1.3"><path d="M3 0l4.5 9M8 0l-4.5 9"/><ellipse cx="3" cy="12" rx="1.8" ry="2.3"/><ellipse cx="8" cy="12" rx="1.8" ry="2.3"/></g><g stroke="#808080" fill="none" stroke-width="1.3"><path d="M3 0l4.5 9M8 0l-4.5 9"/><ellipse cx="3" cy="12" rx="1.8" ry="2.3"/><ellipse cx="8" cy="12" rx="1.8" ry="2.3"/></g></svg>
<svg class="a" style="left:503px;top:50px" width="17" height="15" viewBox="0 0 17 15" shape-rendering="crispEdges"><path d="M0 0h6l2 2v8h-8z" fill="#808080"/><path d="M1 1h5l1 1v7h-6z" fill="#D4D0C8"/><path d="M6 4h7l3 3v8h-10z" fill="#808080"/><path d="M7 5h6l2 2v7h-8z" fill="#F0F0F0"/><g fill="#808080"><rect x="2" y="3" width="3" height="1"/><rect x="2" y="5" width="3" height="1"/><rect x="8" y="8" width="5" height="1"/><rect x="8" y="10" width="5" height="1"/><rect x="8" y="12" width="5" height="1"/></g></svg>
<svg class="a" style="left:526px;top:49px" width="17" height="15" viewBox="0 0 17 15" shape-rendering="crispEdges"><rect x="0" y="2" width="12" height="13" rx="2" fill="#000"/><rect x="1" y="3" width="10" height="11" fill="#A0A060"/><path d="M3 1h6l1 2h-8z" fill="#E0E000" stroke="#000" stroke-width="0.8"/><rect x="7" y="6" width="10" height="9" fill="#0000A0"/><rect x="8" y="7" width="8" height="7" fill="#F8FCF8"/><rect x="9" y="9" width="4" height="2" fill="#000"/></svg>
<svg class="a" style="left:535px;top:49px" width="8" height="5" viewBox="0 0 8 5" shape-rendering="crispEdges"><path d="M0 0h8v1h-1v1h-1v1h-1v1h-1v1h-1v-1h-1v-1h-1v-1h-1v-1h-1z" fill="#000"/><path d="M2 1h4v1h-1v1h-2v-1h-1z" fill="#00E000"/></svg>
<svg class="a" style="left:557px;top:52px" width="16" height="11" viewBox="0 0 16 11" shape-rendering="crispEdges"><path d="M2 1h11l2 2v3l-2 2h-9v-2h8l1-1v-1l-1-1h-10z" fill="#000080"/><path d="M0 8l4-3v6z" fill="#000080"/><rect x="2" y="7" width="10" height="2" fill="#000080"/></svg>
<svg class="a" style="left:567px;top:49px" width="8" height="5" viewBox="0 0 8 5" shape-rendering="crispEdges"><path d="M0 0h8v1h-1v1h-1v1h-1v1h-1v1h-1v-1h-1v-1h-1v-1h-1v-1h-1z" fill="#000"/><path d="M2 1h4v1h-1v1h-2v-1h-1z" fill="#00E000"/></svg>
<svg class="a" style="left:581px;top:52px" width="16" height="11" viewBox="0 0 16 11" shape-rendering="crispEdges"><path d="M2 1h11l2 2v3l-2 2h-9v-2h8l1-1v-1l-1-1h-10z" fill="#808080"/><path d="M8 8l-4-3v6z" fill="#808080"/><rect x="0" y="7" width="5" height="2" fill="#808080"/></svg>
<svg class="a" style="left:591px;top:49px" width="8" height="5" viewBox="0 0 8 5" shape-rendering="crispEdges"><path d="M0 0h8l-4 4z" fill="#808080"/></svg>
<svg class="a" style="left:611px;top:50px" width="17" height="16" viewBox="0 0 17 16" shape-rendering="crispEdges"><path d="M8 0L10 6L17 7.5L10 9L8 16L6 9L0 7.5L6 6z" fill="#fff"/><path d="M9 3h1M10 5h1M6 10h1M7 12h1M11 9h2M13 8h1M3 7h2M2 8h1" stroke="#0000A0"/><rect x="8" y="1" width="1" height="15" fill="#000"/><rect x="0" y="7" width="17" height="1" fill="#000"/></svg>
<svg class="a" style="left:634px;top:50px" width="17" height="15" viewBox="0 0 17 15" shape-rendering="crispEdges"><rect x="9" y="0" width="8" height="5" fill="#F8F8A0"/><path d="M10 1h1M12 1h1M14 1h1M16 1h1M10 3h1M12 3h1M14 3h1" stroke="#E0E000"/><path d="M8 1l1 0 1 2-1 2 2 3-2 2" stroke="#000" fill="none"/><path d="M10 9l4-3" stroke="#000"/><path d="M3 2v6M0 5h6" stroke="#808080"/><g fill="#000"><rect x="1" y="12" width="5" height="3"/><rect x="2" y="10" width="3" height="2"/><rect x="8" y="12" width="5" height="3"/><rect x="9" y="10" width="3" height="2"/></g><rect x="3" y="11" width="1" height="2" fill="#00A0A0"/><rect x="10" y="11" width="1" height="2" fill="#0000C0"/></svg>
<svg class="a" style="left:657px;top:50px" width="16" height="15" viewBox="0 0 16 15" shape-rendering="crispEdges"><path d="M0 0h6l3 3v8h-9z" fill="#404040"/><path d="M1 1h5l2 2v7h-7z" fill="#F8FCF8"/><g fill="#404040"><rect x="2" y="4" width="4" height="1"/><rect x="2" y="6" width="4" height="1"/></g><circle cx="10.5" cy="10" r="5" fill="#000"/><circle cx="10.5" cy="10" r="4" fill="#0060E0"/><path d="M8 7h3l1 2-2 2 1 3h-2l-2-3z" fill="#00A000"/></svg>
<svg class="a" style="left:688px;top:48px" width="17" height="16" viewBox="0 0 17 16" shape-rendering="crispEdges"><path d="M8.5 0l-3 4h6z" fill="none" stroke="#000"/><rect x="0" y="4" width="17" height="12" fill="#000"/><rect x="1" y="5" width="15" height="10" fill="#F0E000"/><rect x="3" y="7" width="11" height="6" fill="#60E0F0"/><rect x="3" y="11" width="11" height="2" fill="#00A000"/><path d="M5 11l3.5-3 3.5 3" stroke="#E00000" stroke-width="1.3" fill="none"/><rect x="7" y="10" width="3" height="3" fill="#fff"/></svg>
<div class="a" style="left:289px;top:79px;font:bold 14px/16px 'Liberation Serif',serif;transform:scaleX(1.3);transform-origin:0 0">F</div>
<div class="a" style="left:314px;top:79px;font:italic bold 14px/16px 'Liberation Serif',serif">k</div>
<div class="a" style="left:336px;top:79px;font:bold 14px/16px 'Liberation Serif',serif;text-decoration:underline;text-underline-offset:1px">U</div>
<svg class="a" style="left:364px;top:82px" width="16" height="12" viewBox="0 0 16 12" shape-rendering="crispEdges"><rect x="0" y="0" width="14" height="2" fill="#000"/><rect x="0" y="2.5" width="10" height="2" fill="#000"/><rect x="0" y="5" width="14" height="2" fill="#000"/><rect x="0" y="7.5" width="10" height="2" fill="#000"/><rect x="0" y="10" width="14" height="2" fill="#000"/></svg>
<svg class="a" style="left:388px;top:82px" width="16" height="12" viewBox="0 0 16 12" shape-rendering="crispEdges"><rect x="0" y="0" width="14" height="2" fill="#000"/><rect x="2" y="2.5" width="10" height="2" fill="#000"/><rect x="0" y="5" width="14" height="2" fill="#000"/><rect x="2" y="7.5" width="10" height="2" fill="#000"/><rect x="0" y="10" width="14" height="2" fill="#000"/></svg>
<svg class="a" style="left:411px;top:82px" width="16" height="12" viewBox="0 0 16 12" shape-rendering="crispEdges"><rect x="0" y="0" width="14" height="2" fill="#000"/><rect x="4" y="2.5" width="10" height="2" fill="#000"/><rect x="0" y="5" width="14" height="2" fill="#000"/><rect x="4" y="7.5" width="10" height="2" fill="#000"/><rect x="0" y="10" width="14" height="2" fill="#000"/></svg>
<svg class="a" style="left:434px;top:82px" width="16" height="12" viewBox="0 0 16 12" shape-rendering="crispEdges"><rect x="0" y="0" width="14" height="2" fill="#000"/><rect x="0" y="2.5" width="14" height="2" fill="#000"/><rect x="0" y="5" width="14" height="2" fill="#000"/><rect x="0" y="7.5" width="14" height="2" fill="#000"/><rect x="0" y="10" width="14" height="2" fill="#000"/></svg>
<svg class="a" style="left:465px;top:79px" width="16" height="13" viewBox="0 0 16 13" shape-rendering="crispEdges"><path d="M0 2l4 4-4 4z" fill="#000080"/><path d="M8 0h7v2h-1v11h-2v-11h-1v11h-2v-6a3 3 0 0 1 -1-6z" fill="#000"/></svg>
<svg class="a" style="left:488px;top:79px" width="16" height="13" viewBox="0 0 16 13" shape-rendering="crispEdges"><path d="M13 2l-4 4 4 4z" fill="#000080"/><path d="M1 0h7v2h-1v11h-2v-11h-1v11h-2v-6a3 3 0 0 1 -1-6z" fill="#000"/></svg>
<svg class="a" style="left:518px;top:79px" width="16" height="15" viewBox="0 0 16 15" shape-rendering="crispEdges"><text x="0" y="6" font-family="Liberation Sans" font-weight="bold" font-size="7" fill="#000080">1</text><text x="0" y="14" font-family="Liberation Sans" font-weight="bold" font-size="7" fill="#000080">2</text><g fill="#000"><rect x="6" y="1" width="9" height="2"/><rect x="6" y="4" width="9" height="1"/><rect x="6" y="7" width="9" height="2"/><rect x="6" y="10" width="9" height="1"/><rect x="6" y="12" width="9" height="2"/></g></svg>
<svg class="a" style="left:543px;top:79px" width="14" height="15" viewBox="0 0 14 15" shape-rendering="crispEdges"><circle cx="2" cy="3" r="1.6" fill="#000080"/><circle cx="2" cy="11" r="1.6" fill="#000080"/><g fill="#000"><rect x="5" y="1" width="9" height="2"/><rect x="5" y="4" width="9" height="1"/><rect x="5" y="7" width="9" height="2"/><rect x="5" y="10" width="9" height="1"/><rect x="5" y="12" width="9" height="2"/></g></svg>
<svg class="a" style="left:564px;top:79px" width="17" height="15" viewBox="0 0 17 15" shape-rendering="crispEdges"><g fill="#808080"><rect x="6" y="0" width="1" height="15"/><rect x="8" y="2" width="8" height="2"/><rect x="8" y="6" width="8" height="2"/><rect x="8" y="10" width="8" height="2"/><path d="M0 7l3-3v2h3v2h-3v2z"/></g></svg>
<svg class="a" style="left:587px;top:79px" width="17" height="15" viewBox="0 0 17 15" shape-rendering="crispEdges"><g fill="#000"><rect x="6" y="0" width="1" height="15"/><rect x="8" y="2" width="8" height="2"/><rect x="8" y="6" width="8" height="2"/><rect x="8" y="10" width="8" height="2"/></g><path d="M5 7l-3-3v2h-2v2h2v2z" fill="#000080"/></svg>
<div class="a" style="left:618px;top:76px;font:bold 15px/16px 'Liberation Serif',serif;transform:scaleX(1.25);transform-origin:0 0">A</div>
<div class="a" style="left:618px;top:90px;width:17px;height:4px;background:#800000"></div>
<svg class="a" style="left:629px;top:77px" width="8" height="5" viewBox="0 0 8 5" shape-rendering="crispEdges"><path d="M0 0h8v1h-1v1h-1v1h-1v1h-1v1h-1v-1h-1v-1h-1v-1h-1v-1h-1z" fill="#000"/><path d="M2 1h4v1h-1v1h-2v-1h-1z" fill="#00E000"/></svg>
<svg class="a" style="left:641px;top:77px" width="16" height="13" viewBox="0 0 16 13" shape-rendering="crispEdges"><path d="M3 8l9-8 3 3-9 8h-3z" fill="#000"/><path d="M4 8l8-7 2 2-8 7h-2z" fill="#E0E0F0"/><path d="M12 3l2 0-8 7" stroke="#0000C0"/><path d="M2 11l1-3 3 3z" fill="#F0E000"/></svg>
<div class="a" style="left:641px;top:90px;width:17px;height:4px;background:#F8F800"></div>
<svg class="a" style="left:650px;top:77px" width="8" height="5" viewBox="0 0 8 5" shape-rendering="crispEdges"><path d="M0 0h8v1h-1v1h-1v1h-1v1h-1v1h-1v-1h-1v-1h-1v-1h-1v-1h-1z" fill="#000"/><path d="M2 1h4v1h-1v1h-2v-1h-1z" fill="#00E000"/></svg>
<svg class="a" style="left:664px;top:78px" width="18" height="16" viewBox="0 0 18 16" shape-rendering="crispEdges"><rect x="0" y="0" width="1" height="12" fill="#0000C0"/><rect x="0" y="0" width="14" height="1" fill="#0000C0"/><rect x="1" y="3" width="13" height="1" fill="#0000C0"/><rect x="1" y="1" width="6" height="2" fill="#E0E0E0"/><rect x="2" y="4" width="1" height="7" fill="#A000A0"/><rect x="4" y="4" width="1" height="7" fill="#A000A0"/><rect x="0" y="12" width="17" height="4" fill="#000"/><rect x="1" y="13" width="15" height="2" fill="#F8FCF8"/></svg>
<svg class="a" style="left:674px;top:77px" width="8" height="5" viewBox="0 0 8 5" shape-rendering="crispEdges"><path d="M0 0h8v1h-1v1h-1v1h-1v1h-1v1h-1v-1h-1v-1h-1v-1h-1v-1h-1z" fill="#000"/><path d="M2 1h4v1h-1v1h-2v-1h-1z" fill="#00E000"/></svg>
<svg class="a" style="left:10px;top:110px" width="17" height="16" viewBox="0 0 17 16" shape-rendering="crispEdges"><rect x="0" y="3" width="12" height="12" fill="#000"/><g fill="#fff"><rect x="1" y="6" width="3" height="2"/><rect x="5" y="6" width="3" height="2"/><rect x="9" y="6" width="2" height="2"/><rect x="1" y="9" width="3" height="2"/><rect x="5" y="9" width="3" height="2"/><rect x="9" y="9" width="2" height="2"/><rect x="1" y="12" width="3" height="2"/><rect x="5" y="12" width="3" height="2"/><rect x="9" y="12" width="2" height="2"/></g><path d="M12 0h1v1h1v1h1v1h1v1h-1v1h-1v1h-1v1h-1z" fill="#000"/><path d="M13 2h1v1h1v1h-1v1h-1z" fill="#00E000"/></svg>
<svg class="a" style="left:10px;top:138px" width="17" height="16" viewBox="0 0 17 16" shape-rendering="crispEdges"><path d="M12 0h1v1h1v1h1v1h1v1h-1v1h-1v1h-1v1h-1z" fill="#000"/><path d="M13 2h1v1h1v1h-1v1h-1z" fill="#00E000"/><g fill="#000"><rect x="4" y="4" width="8" height="1"/><rect x="4" y="7" width="10" height="1"/><rect x="4" y="10" width="10" height="1"/><rect x="4" y="13" width="10" height="1"/></g><path d="M0 6l3 3-3 3z" fill="#0000C0"/><rect x="4" y="8" width="5" height="2" fill="#E0E080"/></svg>
<svg class="a" style="left:10px;top:162px" width="17" height="17" viewBox="0 0 17 17" shape-rendering="crispEdges"><path d="M12 0h1v1h1v1h1v1h1v1h-1v1h-1v1h-1v1h-1z" fill="#000"/><path d="M13 2h1v1h1v1h-1v1h-1z" fill="#00E000"/><circle cx="7" cy="10" r="6" fill="#000"/><path d="M7 10v-5a5 5 0 0 0-5 5z" fill="#F0F060"/><path d="M7 10h5a5 5 0 0 0-5-5z" fill="#40C0C0"/><path d="M2 10a5 5 0 0 0 10 0z" fill="#8040A0"/></svg>
<svg class="a" style="left:10px;top:186px" width="17" height="16" viewBox="0 0 17 16" shape-rendering="crispEdges"><path d="M12 0h1v1h1v1h1v1h1v1h-1v1h-1v1h-1v1h-1z" fill="#000"/><path d="M13 2h1v1h1v1h-1v1h-1z" fill="#00E000"/><path d="M0.5 7.5h9v7h-9z" fill="#fff" stroke="#000"/><path d="M13 5l2 2-8 8-3 1 1-3z" fill="#0000C0"/></svg>
<svg class="a" style="left:10px;top:209px" width="17" height="16" viewBox="0 0 17 16" shape-rendering="crispEdges"><path d="M12 0h1v1h1v1h1v1h1v1h-1v1h-1v1h-1v1h-1z" fill="#000"/><path d="M13 2h1v1h1v1h-1v1h-1z" fill="#00E000"/><rect x="0" y="2" width="12" height="13" fill="#000"/><rect x="1" y="3" width="10" height="11" fill="#D4D0C8"/><g fill="#000"><rect x="2" y="5" width="7" height="1"/><rect x="3" y="7" width="4" height="2"/><rect x="2" y="10" width="8" height="1"/><rect x="2" y="12" width="8" height="1"/></g></svg>
<svg class="a" style="left:10px;top:240px" width="17" height="17" viewBox="0 0 17 17" shape-rendering="crispEdges"><path d="M12 0h1v1h1v1h1v1h1v1h-1v1h-1v1h-1v1h-1z" fill="#000"/><path d="M13 2h1v1h1v1h-1v1h-1z" fill="#00E000"/><text x="4" y="6" font-family="Liberation Sans" font-size="6" fill="#000080">A</text><text x="0" y="16" font-family="Liberation Sans" font-weight="bold" font-size="6" fill="#000080">ABC</text><path d="M6 7l-3 3M6 7l3 3" stroke="#000080"/></svg>
<svg class="a" style="left:12px;top:264px" width="10" height="14" viewBox="0 0 10 14" shape-rendering="crispEdges"><path d="M1 0h3l1 1 1-1h3v1h-2v11h2v1h-3l-1-1-1 1h-3v-1h2v-11h-2z" fill="#404080"/></svg>
<svg class="a" style="left:10px;top:295px" width="17" height="14" viewBox="0 0 17 14" shape-rendering="crispEdges"><text x="1" y="6" font-family="Liberation Sans" font-size="7" fill="#000">ABC</text><path d="M2 9l3 3 8-6" stroke="#000080" stroke-width="1.6" fill="none"/></svg>
<svg class="a" style="left:10px;top:320px" width="17" height="12" viewBox="0 0 17 12" shape-rendering="crispEdges"><text x="1" y="6" font-family="Liberation Sans" font-size="7" fill="#000">ABC</text><path d="M1 10q2-3 4 0t4 0 4 0" stroke="#E00000" stroke-width="1" fill="none"/></svg>
<svg class="a" style="left:10px;top:351px" width="16" height="12" viewBox="0 0 16 12" shape-rendering="crispEdges"><path d="M1 2h4v3h5v-3h4l1 9h-6v-3h-3v3h-6z" fill="#000"/><rect x="2" y="6" width="2" height="3" fill="#F0F000"/><rect x="11" y="6" width="2" height="3" fill="#F0F000"/></svg>
<svg class="a" style="left:10px;top:372px" width="16" height="14" viewBox="0 0 16 14" shape-rendering="crispEdges"><rect x="0" y="0" width="16" height="14" fill="#000"/><rect x="1" y="1" width="14" height="12" fill="#F8FCF8"/><rect x="1" y="1" width="3" height="12" fill="#D4D0C8"/><g fill="#404040"><rect x="4" y="4" width="11" height="1"/><rect x="4" y="7" width="11" height="1"/><rect x="4" y="10" width="11" height="1"/></g><rect x="4" y="1" width="1" height="12" fill="#000"/></svg>
<div class="a" style="left:13px;top:402px;font:bold 13px/14px 'Liberation Sans',sans-serif;color:#000080">¶</div>
<svg class="a" style="left:10px;top:425px" width="17" height="15" viewBox="0 0 17 15" shape-rendering="crispEdges"><rect x="0" y="4" width="10" height="7" fill="#8040A0"/><path d="M0 13h12l2 2h-14z" fill="#40C0C0"/><path d="M6 1l9 9M15 1l-9 9" stroke="#E00000" stroke-width="2"/></svg>
<svg class="a" style="left:9px;top:448px" width="17" height="16" viewBox="0 0 17 16" shape-rendering="crispEdges"><rect x="0" y="0" width="16" height="16" fill="#000"/><rect x="1" y="1" width="14" height="14" fill="#0000A0"/><circle cx="9" cy="8" r="6" fill="#000"/><circle cx="9" cy="8" r="5" fill="#0080E0"/><path d="M6 4h3l2 3-2 2 1 3h-2l-3-4z" fill="#00A000"/></svg>
<svg class="a" style="left:618px;top:413px" width="14" height="14" viewBox="0 0 14 14" shape-rendering="crispEdges"><rect x="0" y="0" width="8" height="7" fill="#808080"/><rect x="4" y="4" width="8" height="7" fill="#A0A0A0"/><path d="M6 9l3 3 3-3-3-1z" fill="none" stroke="#808080"/></svg>
<svg class="a" style="left:640px;top:413px" width="13" height="13" viewBox="0 0 13 13" shape-rendering="crispEdges"><circle cx="6.5" cy="6.5" r="6" fill="#000"/><circle cx="6.5" cy="6.5" r="4.5" fill="#C0C0E0"/><path d="M5 4l3 2.5-3 2.5" stroke="#000080" stroke-width="1.4" fill="none"/></svg>
<svg class="a" style="left:662px;top:412px" width="17" height="16" viewBox="0 0 17 16" shape-rendering="crispEdges"><path d="M8.5 0l-3 3h6z" fill="#0000C0"/><path d="M0 6l6 4-6 5z M17 6l-6 4 6 5z" fill="#000"/><path d="M2 6h4M11 6h4" stroke="#000" stroke-dasharray="1 1"/></svg>
<svg class="a" style="left:684px;top:412px" width="17" height="16" viewBox="0 0 17 16" shape-rendering="crispEdges"><path d="M0 1l6 5-6 4z M17 1l-6 5 6 4z" fill="#000"/><path d="M8.5 15l-3-3h6z" fill="#0000C0"/><path d="M2 11h4M11 11h4" stroke="#000" stroke-dasharray="1 1"/></svg>
<svg class="a" style="left:616px;top:438px" width="17" height="12" viewBox="0 0 17 12" shape-rendering="crispEdges"><rect x="0.5" y="0.5" width="16" height="11" fill="#D4D0C8" stroke="#404040"/><rect x="1" y="1" width="15" height="2" fill="#0000A0"/><path d="M2 5h13M2 7h13M2 9h13" stroke="#000" stroke-dasharray="1 1"/></svg>
<svg class="a" style="left:639px;top:438px" width="17" height="12" viewBox="0 0 17 12" shape-rendering="crispEdges"><rect x="0.5" y="0.5" width="16" height="11" fill="#D4D0C8" stroke="#000"/><rect x="1" y="1" width="15" height="2" fill="#000080"/><path d="M4 5l5 4M9 9h-3M9 9v-3" stroke="#0000A0" fill="none"/></svg>
<svg class="a" style="left:673px;top:436px" width="10" height="16" viewBox="0 0 10 16" shape-rendering="crispEdges"><path d="M1.5 0.5h7v10l-3.5 4.5-3.5-4.5z" fill="#D4D0C8" stroke="#808000" stroke-width="1.2"/><path d="M4 2.5v7l1.5 2" stroke="#000" stroke-width="1.2" fill="none"/></svg>
<svg class="a" style="left:701px;top:436px" width="17" height="15" viewBox="0 0 17 15" shape-rendering="crispEdges"><rect x="0" y="0" width="9" height="2" fill="#000"/><g fill="#606060"><rect x="2" y="4" width="14" height="1"/><rect x="2" y="7" width="14" height="1"/><rect x="2" y="10" width="14" height="1"/><rect x="2" y="13" width="14" height="1"/></g><rect x="9" y="0" width="8" height="9" fill="#000080"/><rect x="10" y="1" width="6" height="7" fill="#D4D0C8"/><path d="M13 2v5" stroke="#000080"/></svg>
<svg class="a" style="left:723px;top:436px" width="17" height="15" viewBox="0 0 17 15" shape-rendering="crispEdges"><rect x="0" y="11" width="17" height="4" fill="#000"/><rect x="1" y="12" width="15" height="2" fill="#fff"/><g fill="#606060"><rect x="2" y="1" width="14" height="1"/><rect x="2" y="4" width="14" height="1"/><rect x="2" y="7" width="14" height="1"/></g><rect x="9" y="0" width="8" height="9" fill="#000080"/><rect x="10" y="1" width="6" height="7" fill="#D4D0C8"/><path d="M13 2v5" stroke="#000080"/></svg>
<svg class="a" style="left:745px;top:436px" width="10" height="15" viewBox="0 0 10 15" shape-rendering="crispEdges"><rect x="0" y="0" width="10" height="15" fill="#000"/><rect x="1" y="1" width="9" height="13" fill="#D4D0C8"/><circle cx="3" cy="12" r="2" fill="#0000C0"/></svg>
</body></html>
